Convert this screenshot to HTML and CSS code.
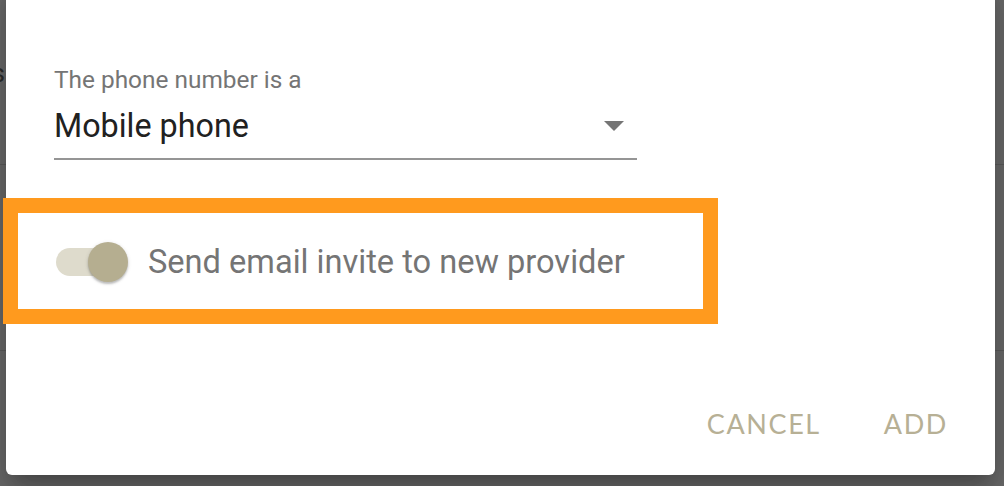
FILE: index.html
```html
<!DOCTYPE html>
<html lang="en">
<head>
<meta charset="utf-8">
<title>Add provider</title>
<link rel="stylesheet" href="styles.css">
</head>
<body>
  <!-- page underneath the modal, dimmed by the scrim -->
  <div class="page">
    <div class="page-title"><span>Providers</span></div>
    <div class="page-rule page-rule--first"></div>
    <div class="page-rule page-rule--second"></div>
  </div>

  <div class="dialog" role="dialog">
    <div class="field">
      <label class="field-label">The phone number is a</label>
      <div class="select">
        <span class="select-value">Mobile phone</span>
        <svg class="select-arrow" width="20" height="10" viewBox="0 0 20 10" aria-hidden="true">
          <polygon points="0,0 20,0 10,10" fill="#757575"/>
        </svg>
      </div>
    </div>

    <div class="toggle-row">
      <div class="toggle">
        <span class="toggle-track"></span>
        <span class="toggle-thumb"></span>
      </div>
      <span class="toggle-label">Send email invite to new provider</span>
    </div>

    <div class="actions">
      <button class="btn">CANCEL</button>
      <button class="btn">ADD</button>
    </div>
  </div>

  <div class="highlight"></div>
</body>
</html>
```

FILE: styles.css
```css
html, body {
  margin: 0;
  padding: 0;
  height: 100%;
  overflow: hidden;
}

body {
  background: #6b6b6b;
  font-family: Roboto, "Noto Sans", Arial, sans-serif;
  position: relative;
}

/* underlying page (seen through the scrim) */
.page {
  display: flex;
  flex-direction: column;
  padding-top: 58px;
}

.page-title {
  width: 5px;
  display: flex;
  justify-content: flex-end;
  white-space: nowrap;
  font-size: 26px;
  line-height: 30px;
  color: #2c2c2c;
}

.page-rule {
  height: 1px;
  background: #5c5c5c;
}

.page-rule--first {
  margin-top: 76px;
}

.page-rule--second {
  margin-top: 185px;
}

/* modal dialog */
.dialog {
  position: absolute;
  left: 6px;
  right: 9px;
  top: -24px;
  bottom: 11px;
  background: #ffffff;
  border-radius: 6px;
  box-shadow: 0 11px 15px -7px rgba(0, 0, 0, 0.2),
              0 24px 38px 3px rgba(0, 0, 0, 0.14),
              0 9px 46px 8px rgba(0, 0, 0, 0.12);
  padding: 90px 47px 0 48px;
  display: flex;
  flex-direction: column;
  box-sizing: border-box;
}

.field {
  width: 583px;
  display: flex;
  flex-direction: column;
}

.field-label {
  font-size: 24.4px;
  line-height: 28px;
  color: #757575;
}

.select {
  margin-top: 12px;
  display: flex;
  align-items: center;
  justify-content: space-between;
  padding-bottom: 12px;
  border-bottom: 2px solid #959595;
}

.select-value {
  font-size: 32.3px;
  line-height: 40px;
  color: #212121;
}

.select-arrow {
  margin-right: 13px;
}

.toggle-row {
  margin-top: 82px;
  display: flex;
  align-items: center;
  gap: 20px;
  height: 40px;
  padding-left: 2px;
}

.toggle {
  position: relative;
  width: 72px;
  height: 40px;
  display: flex;
  align-items: center;
}

.toggle-track {
  width: 64px;
  height: 28px;
  border-radius: 14px;
  background: #dedbcc;
}

.toggle-thumb {
  position: absolute;
  left: 32px;
  top: 0;
  width: 40px;
  height: 40px;
  border-radius: 50%;
  background: #b5ae90;
  box-shadow: 0 2px 2px rgba(0, 0, 0, 0.2), 0 1px 4px rgba(0, 0, 0, 0.12);
}

.toggle-label {
  font-size: 32.6px;
  line-height: 38px;
  color: #757575;
}

.actions {
  margin-top: 124px;
  display: flex;
  justify-content: flex-end;
  gap: 63px;
}

.btn {
  border: 0;
  background: none;
  padding: 0;
  font-family: Lato, "Open Sans", sans-serif;
  font-size: 27px;
  line-height: 36px;
  letter-spacing: 1.6px;
  color: #b7b095;
  cursor: pointer;
}

/* orange callout frame around the invite option */
.highlight {
  position: absolute;
  left: 3px;
  top: 198px;
  width: 715px;
  height: 126px;
  border: 15px solid #ff9a1e;
  box-sizing: border-box;
}
```
